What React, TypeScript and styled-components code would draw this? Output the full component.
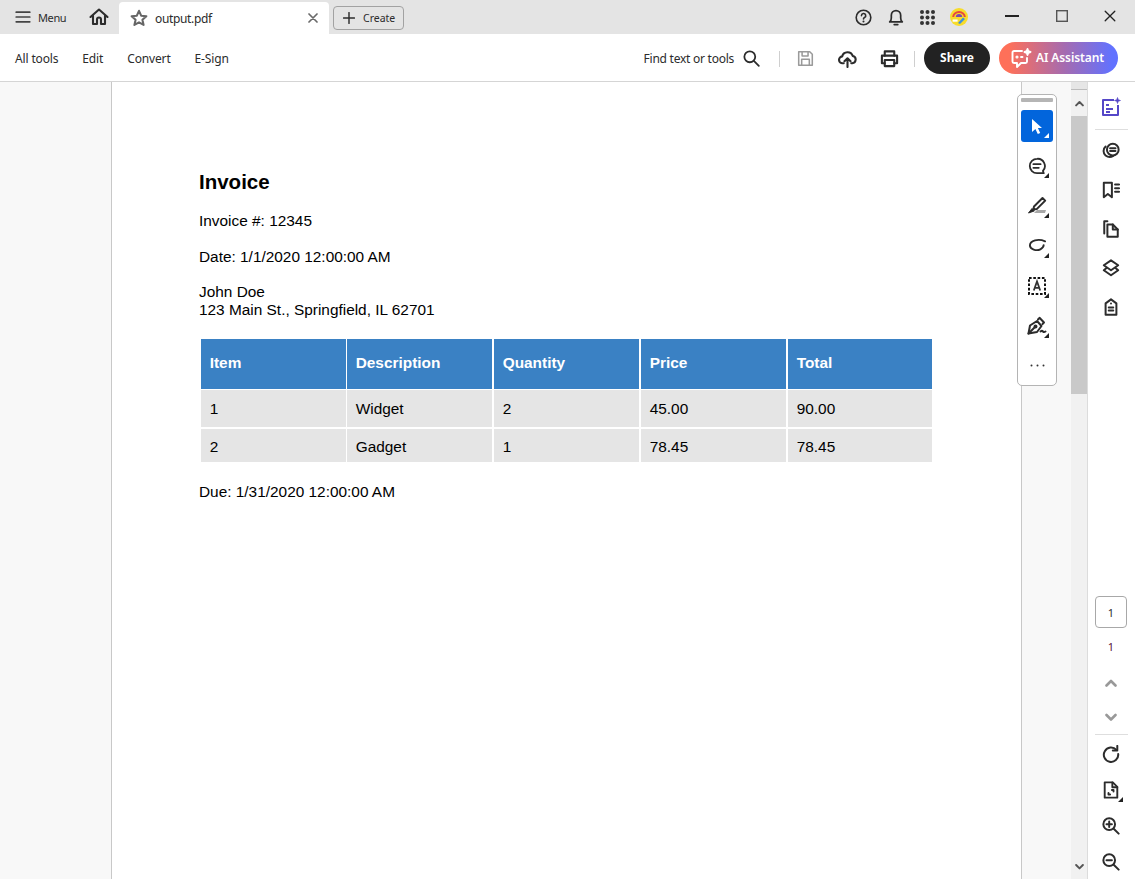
import React from 'react';
import styled, { createGlobalStyle } from 'styled-components';

const GlobalStyle = createGlobalStyle`
  html, body {
    margin: 0;
    padding: 0;
    height: 100%;
    overflow: hidden;
    background: #fff;
  }
  #root {
    height: 100%;
  }
`;

type IconProps = { size?: number; color?: string; sw?: number };

const Svg = ({ size = 20, color = '#2c2c2c', sw = 2.2, children }: IconProps & { children: React.ReactNode }) => (
  <svg width={size} height={size} viewBox="0 0 20 20" fill="none" stroke={color} strokeWidth={sw} strokeLinecap="round" strokeLinejoin="round">
    {children}
  </svg>
);

const MenuIcon = () => (
  <Svg size={16} sw={2.1} color="#444"><path d="M1.5 4h17M1.5 10h17M1.5 16h17" /></Svg>
);
const HomeIcon = () => (
  <Svg size={20} sw={2.1}><path d="M1.5 10 10 2.5 18.5 10M4 8.5V17h4v-4.5a2 2 0 0 1 4 0V17h4V8.5" /></Svg>
);
const StarIcon = () => (
  <Svg size={18} sw={2.3} color="#666"><path d="M10 2l2.4 5.4 5.8.6-4.4 3.9 1.3 5.8L10 14.8l-5.1 2.9 1.3-5.8L1.8 8l5.8-.6z" /></Svg>
);
const CloseIcon = ({ size = 10, color = '#6a6a6a', sw = 3.4 }: IconProps) => (
  <Svg size={size} sw={sw} color={color}><path d="M2 2l16 16M18 2 2 18" /></Svg>
);
const PlusIcon = () => (
  <Svg size={12} sw={2.4}><path d="M10 1v18M1 10h18" /></Svg>
);
const HelpIcon = () => (
  <Svg size={17} sw={1.9}>
    <circle cx="10" cy="10" r="8.6" />
    <path d="M7.6 7.8a2.5 2.5 0 1 1 3.6 2.2c-.8.4-1.2.9-1.2 1.7" />
    <path d="M10 14.6v.1" strokeWidth={2.4} />
  </Svg>
);
const BellIcon = () => (
  <Svg size={18} sw={1.9}>
    <path d="M3 15.5c1.2-1.2 1.8-2.4 1.8-4.5V8a5.2 5.2 0 0 1 10.4 0v3c0 2.1.6 3.3 1.8 4.5z" />
    <path d="M8 18.4h4" />
  </Svg>
);
const AppsIcon = () => (
  <svg width="15" height="15" viewBox="0 0 15 15" fill="#333">
    {[2, 7.5, 13].flatMap((y) => [2, 7.5, 13].map((x) => <circle key={`${x}-${y}`} cx={x} cy={y} r="2" />))}
  </svg>
);
const Avatar = () => (
  <svg width="18" height="18" viewBox="0 0 18 18">
    <circle cx="9" cy="9" r="9" fill="#f7dc2a" />
    <path d="M3.2 9a5.8 5 0 0 1 11.6 0" fill="none" stroke="#e8483f" strokeWidth="2" />
    <path d="M5.8 9a3.2 3 0 0 1 6.4 0" fill="#7a4bb0" />
    <path d="M8 15l5-5.5 2 1.5-5 5z" fill="#3d8fe0" />
    <path d="M2.6 11.5h5v2.2h-5z" fill="#fff" />
  </svg>
);
const MinimizeIcon = () => (
  <svg width="14" height="2" viewBox="0 0 14 2"><rect width="14" height="2" fill="#222" /></svg>
);
const MaximizeIcon = () => (
  <svg width="12" height="12" viewBox="0 0 12 12" fill="none" stroke="#555" strokeWidth="1.4"><rect x=".7" y=".7" width="10.6" height="10.6" /></svg>
);
const SearchIcon = () => (
  <Svg size={17} sw={2.1}><circle cx="8" cy="8" r="6.4" /><path d="M12.8 12.8 18.6 18.6" /></Svg>
);
const SaveIcon = () => (
  <Svg size={17} sw={1.8} color="#9a9a9a">
    <path d="M2 2h13l3 3v13H2z" /><path d="M6 2v5h7V2M5.5 18v-7h9v7" />
  </Svg>
);
const UploadIcon = () => (
  <Svg size={19} sw={2.2}>
    <path d="M6 15H5a3.6 3.6 0 0 1-.6-7.2 5.8 5.8 0 0 1 11.1-.5A3.9 3.9 0 0 1 15 15h-1" />
    <path d="M10 19V10M6.8 13 10 9.8l3.2 3.2" />
  </Svg>
);
const PrintIcon = () => (
  <Svg size={19} sw={2.2}>
    <path d="M5 7V2.5h10V7" />
    <path d="M5 15H2V7h16v8h-3" />
    <path d="M5 11.5h10V18H5z" />
  </Svg>
);
const AiIcon = () => (
  <svg width="21" height="20" viewBox="0 0 21 20" fill="none" stroke="#fff" strokeWidth="1.9" strokeLinejoin="round" strokeLinecap="round">
    <path d="M11 3H3a1.5 1.5 0 0 0-1.5 1.5v9A1.5 1.5 0 0 0 3 15h3v4l4-4h4.5a1.5 1.5 0 0 0 1.5-1.5V10" />
    <circle cx="6" cy="9" r=".6" />
    <path d="M10 9h1.5" />
    <path d="M16.5 1l.8 2.2 2.2.8-2.2.8-.8 2.2-.8-2.2-2.2-.8 2.2-.8z" fill="#fff" />
  </svg>
);
const ArrowIcon = () => (
  <svg width="14" height="17" viewBox="0 0 14 17"><path d="M2 1v13l3.4-3 2.4 5 2.4-1.1-2.3-4.9H12z" fill="#fff" /></svg>
);
const CommentIcon = () => (
  <Svg size={18} sw={2}>
    <path d="M10 2a8 8 0 1 0 0 16h7.5l-.9-2.6A8 8 0 0 0 10 2z" />
    <path d="M6 8h8M6 12h6" />
  </Svg>
);
const PenIcon = () => (
  <svg width="20" height="20" viewBox="0 0 20 20" fill="none" stroke="#2c2c2c" strokeWidth="2" strokeLinejoin="round">
    <path d="M7 17l3-3h9l-1 3z" fill="#a8a8a8" stroke="none" />
    <path d="M7 10.5 15.5 2l2.700 2.600-8.500 8.500-3.400.4z" />
    <path d="M5 12.5l2.400 2.400L1.500 17z" fill="#222" strokeWidth="1" />
  </svg>
);
const LassoIcon = () => (
  <Svg size={19} sw={2}>
    <path d="M18 4.500C11 1.500 2 3.500 2 9c0 4 7 6 11 4 2.500-1.300 3.500-3 3.500-4.500" />
  </Svg>
);
const TextSelectIcon = () => (
  <svg width="18" height="18" viewBox="0 0 18 18" fill="none">
    <rect x="1" y="1" width="16" height="16" stroke="#111" strokeWidth="2" strokeDasharray="2.6 1.7" />
    <path d="M5.8 13.5 9 4.5l3.2 9M6.9 10.8h4.2" stroke="#333" strokeWidth="1.8" />
  </svg>
);
const PenNibIcon = () => (
  <svg width="20" height="20" viewBox="0 0 20 20" fill="none" stroke="#2c2c2c" strokeWidth="2" strokeLinejoin="round" strokeLinecap="round">
    <path d="M1.5 17.5 3 9.5 10 5l4.5 5L10 16z" />
    <path d="M11 3.500 12.500 1.800 17 6.500 15.500 8" />
    <path d="M1.500 17.500 7.500 11.500" />
    <circle cx="8.500" cy="10.500" r="1" fill="#222" />
    <path d="M13.500 15.500c1-.8 1.800-.8 2.500 0s1.400.8 2.500 0" />
  </svg>
);
const ExportIcon = () => (
  <svg width="20" height="20" viewBox="0 0 20 20" fill="none" stroke="#5547c8" strokeWidth="2" strokeLinejoin="round">
    <path d="M13 3H2v15h15V8" />
    <path d="M5 8h3M5 12h7M5 15h4" />
    <path d="M16.500 .5l.8 2.200 2.200.8-2.200.8-.8 2.200-.8-2.200-2.200-.8 2.200-.8z" fill="#5547c8" strokeWidth=".6" />
  </svg>
);
const CommentsIcon = () => (
  <Svg size={18} sw={2.2}>
    <circle cx="12" cy="8.500" r="6.500" />
    <path d="M9 7h6M9 10h6" />
    <path d="M4 5C1 7.500 1 12.500 4 15c2.500 2 6 2 8.500.5" />
  </Svg>
);
const BookmarkIcon = () => (
  <Svg size={18} sw={2.2}>
    <path d="M2 2h9v16l-4.500-3.500L2 18z" />
    <path d="M14.500 4h4.500M14.500 8h4.500M14.500 12h4.500" />
  </Svg>
);
const PagesIcon = () => (
  <Svg size={18} sw={2.2}>
    <path d="M6 1.500H2.500V15" />
    <path d="M6 5h6l5.500 5.500V18.500H6z" />
    <path d="M12 5v5.500h5.500" />
  </Svg>
);
const LayersIcon = () => (
  <Svg size={18} sw={2.2}>
    <path d="M10 1.500 18 7l-8 5.500L2 7z" />
    <path d="M5 10 2 12.500 10 18l8-5.500-3-2.500" />
  </Svg>
);
const TagIcon = () => (
  <Svg size={18} sw={2.2}>
    <path d="M10 1.500 16 6v12.500H4V6z" />
    <path d="M7.500 10.500h5M7.500 14h5" />
    <path d="M10 6v.1" />
  </Svg>
);
const ChevronIcon = ({ up, color = '#999', size = 12 }: { up?: boolean; color?: string; size?: number }) => (
  <svg width={size} height={size} viewBox="0 0 12 12" fill="none" stroke={color} strokeWidth="2.6" strokeLinecap="round" strokeLinejoin="round">
    <path d={up ? 'M1.5 8.5 6 4l4.5 4.5' : 'M1.5 4 6 8.5 10.5 4'} />
  </svg>
);
const RotateIcon = () => (
  <Svg size={18} sw={2.2}>
    <path d="M16 5.500A8 8 0 1 0 18 10" />
    <path d="M17 1v5h-5" />
  </Svg>
);
const FitIcon = () => (
  <Svg size={18} sw={2.1}>
    <path d="M3 1.500h9l5 5v12H3z" />
    <path d="M11.500 1.500V7H17" />
    <path d="M11 10h1.800v1.800M9 15H7.200v-1.800" />
  </Svg>
);
const ZoomIcon = ({ plus }: { plus?: boolean }) => (
  <Svg size={18} sw={2.2}>
    <circle cx="8" cy="8" r="6.500" />
    <path d="M13 13l5.500 5.500" />
    <path d={plus ? 'M5 8h6M8 5v6' : 'M5 8h6'} />
  </Svg>
);
const MoreIcon = () => (
  <svg width="15" height="3" viewBox="0 0 15 3" fill="#333">
    <circle cx="1.500" cy="1.500" r="1" />
    <circle cx="7.500" cy="1.500" r="1" />
    <circle cx="13.500" cy="1.500" r="1" />
  </svg>
);

const Screen = styled.div`
  display: flex;
  flex-direction: column;
  width: 1135px;
  height: 879px;
  overflow: hidden;
  font-family: "Noto Sans", "Open Sans", sans-serif;
  color: #2c2c2c;
`;

const TabBar = styled.div`
  display: flex;
  align-items: center;
  flex: none;
  height: 34px;
  background: #e4e4e4;
`;

const MenuButton = styled.div`
  display: flex;
  align-items: center;
  gap: 7px;
  margin-left: 15px;
  width: 74px;
  font-size: 11px;
  letter-spacing: -0.4px;
`;

const HomeButton = styled.div`
  display: flex;
  width: 30px;
`;

const Tab = styled.div`
  display: flex;
  align-items: center;
  align-self: flex-end;
  width: 210px;
  height: 32px;
  box-sizing: border-box;
  padding: 0 11px;
  background: #fff;
  border-radius: 4px 4px 0 0;
  font-size: 12px;
  letter-spacing: -0.35px;
`;

const TabName = styled.span`
  flex: 1;
  margin-left: 7px;
`;

const CreateButton = styled.div`
  display: flex;
  align-items: center;
  gap: 8px;
  width: 71px;
  height: 24px;
  box-sizing: border-box;
  margin: 2px 0 0 4px;
  padding-left: 9px;
  border: 1px solid #a2a2a2;
  border-radius: 4px;
  font-size: 10.5px;
`;

const TopIcons = styled.div`
  display: flex;
  align-items: center;
  gap: 15px;
  margin-left: auto;
`;

const WindowControls = styled.div`
  display: flex;
  align-items: center;
  gap: 36.5px;
  margin: -2px 19px 0 37px;
`;

const WindowSlot = styled.span`
  display: flex;
  align-items: center;
`;

const ToolBar = styled.div`
  display: flex;
  align-items: center;
  flex: none;
  height: 45px;
  padding: 2px 17px 0 15px;
  background: #fff;
  border-bottom: 1px solid #d5d5d5;
`;

const NavLink = styled.span`
  margin-right: 24px;
  font-size: 12px;
  letter-spacing: -0.15px;
`;

const FindBox = styled.div`
  display: flex;
  align-items: center;
  gap: 9px;
  margin-left: auto;
  font-size: 12px;
  letter-spacing: -0.25px;
`;

const Divider = styled.span`
  width: 1px;
  height: 16px;
  background: #cfcfcf;
`;

const ToolIcon = styled.span<{ $ml: number }>`
  display: flex;
  margin-left: ${({ $ml }) => $ml}px;
`;

const ShareButton = styled.div`
  display: flex;
  align-items: center;
  justify-content: center;
  width: 66px;
  height: 32px;
  margin: -2px 0 0 9px;
  border-radius: 16px;
  background: #222;
  color: #fff;
  font-size: 12px;
  font-weight: 700;
`;

const AiButton = styled.div`
  display: flex;
  align-items: center;
  gap: 4px;
  width: 119px;
  height: 32px;
  box-sizing: border-box;
  margin: -2px 0 0 9px;
  padding-left: 12px;
  border-radius: 16px;
  background: linear-gradient(90deg, #fe7059 8%, #a56bb0 55%, #6272ff 95%);
  color: #fff;
  font-size: 12px;
  font-weight: 600;
  letter-spacing: -0.1px;
`;

const Main = styled.div`
  position: relative;
  display: flex;
  flex: 1;
  min-height: 0;
`;

const LeftGutter = styled.div`
  width: 111px;
  background: #f8f8f8;
  border-right: 1px solid #c8c8c8;
`;

const Page = styled.div`
  flex: none;
  width: 910px;
  box-sizing: border-box;
  padding: 88px 88px 0 87px;
  background: #fff;
  border-right: 1px solid #c8c8c8;
  font-family: "Liberation Sans", Arial, sans-serif;
  font-size: 15.4px;
  line-height: 18px;
  color: #000;
`;

const Title = styled.h1`
  margin: 0 0 18px;
  font-size: 20.5px;
  line-height: 24px;
  font-weight: 700;
  color: #000;
`;

const Para = styled.p`
  margin: 0 0 17.5px;
`;

const InvoiceGrid = styled.div`
  display: grid;
  grid-template-columns: 146px 147px 147px 147px 144px;
  grid-template-rows: 50px 37px 33px;
  row-gap: 1.5px;
  margin: 19.5px 0 21px 2px;
`;

const Cell = styled.div`
  display: flex;
  align-items: center;
  margin-right: 2px;
  padding-left: 8.7px;

  &:nth-child(5n + 1) {
    margin-right: 1px;
  }
  &:nth-child(5n) {
    margin-right: 0;
  }
`;

const HeadCell = styled(Cell)`
  padding-bottom: 2px;
  background: #3a81c4;
  color: #fff;
  font-weight: 700;
`;

const BodyCell = styled(Cell)<{ $last?: boolean }>`
  padding-top: ${({ $last }) => ($last ? 3 : 0)}px;
  background: #e5e5e5;
`;

const RightGutter = styled.div`
  width: 49px;
  background: #f8f8f8;
`;

const ScrollBar = styled.div`
  display: flex;
  flex-direction: column;
  width: 16px;
  background: #f1f1f1;
  border-right: 1px solid #dcdcdc;
`;

const ScrollCap = styled.div`
  height: 7px;
  background: #e6e6e6;
  border-bottom: 1px solid #bdbdbd;
`;

const ScrollArrow = styled.div<{ $end?: boolean }>`
  display: flex;
  align-items: center;
  justify-content: center;
  height: 26px;
  margin-top: ${({ $end }) => ($end ? 'auto' : '0')};
`;

const ScrollThumb = styled.div`
  height: 278px;
  background: #c9c9c9;
`;

const Rail = styled.div`
  display: flex;
  flex-direction: column;
  align-items: center;
  width: 46px;
  padding-right: 1px;
  background: #fff;
`;

const RailSlot = styled.div<{ $h: number; $pt?: number }>`
  display: flex;
  align-items: center;
  justify-content: center;
  flex: none;
  width: 100%;
  height: ${({ $h }) => $h}px;
  box-sizing: border-box;
  padding-top: ${({ $pt }) => $pt ?? 0}px;
`;

const RailRule = styled.div`
  flex: none;
  width: 33px;
  height: 1px;
  background: #dedede;
`;

const PageBox = styled.div`
  display: flex;
  align-items: center;
  justify-content: center;
  flex: none;
  width: 32px;
  height: 32px;
  box-sizing: border-box;
  margin-top: auto;
  border: 1px solid #a8a8a8;
  border-radius: 4px;
  font-size: 11px;
`;

const PageTotal = styled.div`
  display: flex;
  align-items: center;
  justify-content: center;
  flex: none;
  height: 36px;
  padding-bottom: 2px;
  font-size: 11px;
  color: #5b1238;
`;

const FloatingTools = styled.div`
  position: absolute;
  top: 12px;
  left: 1017px;
  display: flex;
  flex-direction: column;
  align-items: center;
  width: 40px;
  height: 292px;
  box-sizing: border-box;
  padding-top: 3px;
  background: #fff;
  border: 1px solid #b4b4b4;
  border-radius: 5px;
`;

const Handle = styled.div`
  width: 32px;
  height: 4px;
  margin-bottom: 8px;
  border-radius: 1px;
  background: #b5b5b5;
`;

const ToolButton = styled.div<{ $active?: boolean; $flush?: boolean }>`
  position: relative;
  display: flex;
  align-items: center;
  justify-content: center;
  flex: none;
  width: 32px;
  height: 32px;
  margin-bottom: ${({ $flush }) => ($flush ? 0 : 8)}px;
  border-radius: 3px;
  background: ${({ $active }) => ($active ? '#0265dc' : 'transparent')};
`;

const Corner = styled.i<{ $light?: boolean }>`
  position: absolute;
  right: 4px;
  bottom: 4px;
  width: 0;
  height: 0;
  border-style: solid;
  border-width: 0 0 5px 5px;
  border-color: transparent transparent ${({ $light }) => ($light ? '#fff' : '#222')} transparent;
`;

const MoreSlot = styled.div`
  display: flex;
  margin-top: 14px;
`;

const rows = [
  ['1', 'Widget', '2', '45.00', '90.00'],
  ['2', 'Gadget', '1', '78.45', '78.45'],
];

export default function App() {
  return (
    <Screen>
      <GlobalStyle />
      <TabBar>
        <MenuButton><MenuIcon />Menu</MenuButton>
        <HomeButton><HomeIcon /></HomeButton>
        <Tab>
          <StarIcon />
          <TabName>output.pdf</TabName>
          <CloseIcon />
        </Tab>
        <CreateButton><PlusIcon />Create</CreateButton>
        <TopIcons>
          <HelpIcon />
          <BellIcon />
          <AppsIcon />
          <Avatar />
        </TopIcons>
        <WindowControls>
          <WindowSlot><MinimizeIcon /></WindowSlot>
          <WindowSlot><MaximizeIcon /></WindowSlot>
          <WindowSlot><CloseIcon size={12} color="#222" sw={2.2} /></WindowSlot>
        </WindowControls>
      </TabBar>
      <ToolBar>
        <NavLink>All tools</NavLink>
        <NavLink>Edit</NavLink>
        <NavLink>Convert</NavLink>
        <NavLink>E-Sign</NavLink>
        <FindBox>Find text or tools <SearchIcon /></FindBox>
        <ToolIcon $ml={19}><Divider /></ToolIcon>
        <ToolIcon $ml={17}><SaveIcon /></ToolIcon>
        <ToolIcon $ml={24}><UploadIcon /></ToolIcon>
        <ToolIcon $ml={23}><PrintIcon /></ToolIcon>
        <ToolIcon $ml={15}><Divider /></ToolIcon>
        <ShareButton>Share</ShareButton>
        <AiButton><AiIcon />AI Assistant</AiButton>
      </ToolBar>
      <Main>
        <LeftGutter />
        <Page>
          <Title>Invoice</Title>
          <Para>Invoice #: 12345</Para>
          <Para>Date: 1/1/2020 12:00:00 AM</Para>
          <Para>John Doe<br />123 Main St., Springfield, IL 62701</Para>
          <InvoiceGrid>
            {['Item', 'Description', 'Quantity', 'Price', 'Total'].map((h) => (
              <HeadCell key={h}>{h}</HeadCell>
            ))}
            {rows.flatMap((row, r) =>
              row.map((c, i) => <BodyCell key={`${r}-${i}`} $last={r === 1}>{c}</BodyCell>),
            )}
          </InvoiceGrid>
          <Para>Due: 1/31/2020 12:00:00 AM</Para>
        </Page>
        <RightGutter />
        <ScrollBar>
          <ScrollCap />
          <ScrollArrow><ChevronIcon up size={9} color="#555" /></ScrollArrow>
          <ScrollThumb />
          <ScrollArrow $end><ChevronIcon size={9} color="#555" /></ScrollArrow>
        </ScrollBar>
        <Rail>
          <RailSlot $h={47} $pt={3}><ExportIcon /></RailSlot>
          <RailRule />
          <RailSlot $h={40} $pt={2}><CommentsIcon /></RailSlot>
          <RailSlot $h={39}><BookmarkIcon /></RailSlot>
          <RailSlot $h={40}><PagesIcon /></RailSlot>
          <RailSlot $h={38}><LayersIcon /></RailSlot>
          <RailSlot $h={40}><TagIcon /></RailSlot>
          <PageBox>1</PageBox>
          <PageTotal>1</PageTotal>
          <RailSlot $h={34}><ChevronIcon up /></RailSlot>
          <RailSlot $h={34}><ChevronIcon /></RailSlot>
          <RailRule />
          <RailSlot $h={37}><RotateIcon /></RailSlot>
          <RailSlot $h={36}><ToolButton $flush><FitIcon /><Corner /></ToolButton></RailSlot>
          <RailSlot $h={36}><ZoomIcon plus /></RailSlot>
          <RailSlot $h={35}><ZoomIcon /></RailSlot>
        </Rail>
        <FloatingTools>
          <Handle />
          <ToolButton $active><ArrowIcon /><Corner $light /></ToolButton>
          <ToolButton><CommentIcon /><Corner /></ToolButton>
          <ToolButton><PenIcon /><Corner /></ToolButton>
          <ToolButton><LassoIcon /><Corner /></ToolButton>
          <ToolButton><TextSelectIcon /><Corner /></ToolButton>
          <ToolButton><PenNibIcon /><Corner /></ToolButton>
          <MoreSlot><MoreIcon /></MoreSlot>
        </FloatingTools>
      </Main>
    </Screen>
  );
}
